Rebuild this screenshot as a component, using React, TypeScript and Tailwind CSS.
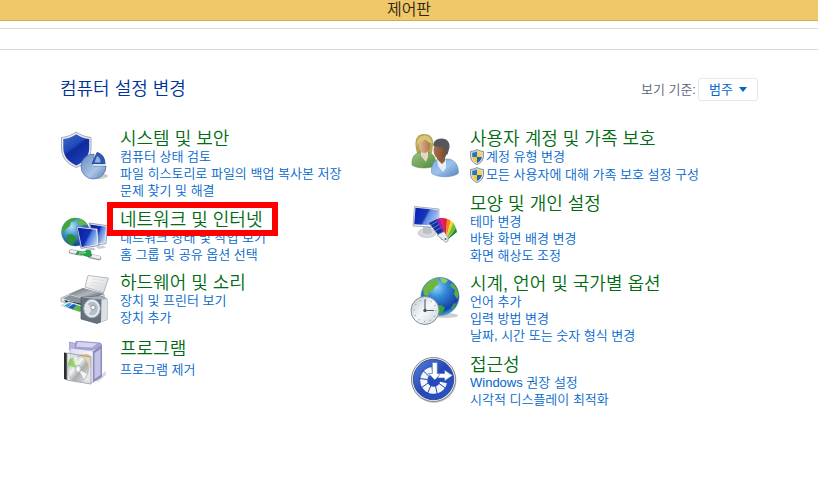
import type { ReactNode } from "react";

type Category = {
  title: string;
  icon: ReactNode;
  links: string[];
  shield?: boolean;
  highlighted?: boolean;
  className?: string;
  linksClassName?: string;
};

function SecurityIcon() {
  return (
    <svg viewBox="0 0 50 50" className="w-[50px] h-[50px]" aria-hidden="true">
      <defs>
        <linearGradient id="sec-a" x1="0" y1="0" x2=".6" y2="1">
          <stop offset="0" stopColor="#3d68cc" />
          <stop offset=".45" stopColor="#2349b8" />
          <stop offset=".55" stopColor="#0f2a9c" />
          <stop offset="1" stopColor="#1b3fb6" />
        </linearGradient>
        <linearGradient id="sec-b" x1="0" y1="0" x2="1" y2="1">
          <stop offset="0" stopColor="#6388c0" />
          <stop offset=".6" stopColor="#a9c5e6" />
          <stop offset="1" stopColor="#5c7fb6" />
        </linearGradient>
      </defs>
      <ellipse cx="38" cy="45" rx="10" ry="3" fill="#000" opacity=".2" />
      <path d="M16.300 1C12 4 7 6 1.500 6.500V17c0 9 5.500 16 14.800 19.500C25.500 33 31 26 31 17V6.500C25.500 6 20.500 4 16.300 1z" fill="#e9ecf0" stroke="#8e969f" strokeWidth=".8" />
      <path d="M16.300 3.200C12.500 5.700 8 7.700 3.300 8.100V17c0 8 4.900 14 13 17.400C24.400 31 29.200 25 29.200 17V8.100C24.500 7.700 20.100 5.700 16.300 3.200z" fill="url(#sec-a)" />
      <path d="M34 23v12h12A12.500 12.500 0 1 1 34 23z" fill="url(#sec-b)" stroke="#5673a5" strokeWidth=".8" />
      <path d="M37 21.500c5 1 8 5.500 8 11.500H32z" fill="#2f58ae" stroke="#1c3f8e" strokeWidth=".8" />
      <path d="M37 25c2.500 1 3.500 3.500 3.500 6.500H34.500z" fill="#8fb0e0" />
      <path d="M32 33h13v2H34z" fill="#d3e1f3" />
    </svg>
  );
}

function NetworkIcon() {
  return (
    <svg viewBox="0 0 50 50" className="w-[50px] h-[50px]" aria-hidden="true">
      <defs>
        <radialGradient id="net-a" cx=".35" cy=".3" r=".75">
          <stop offset="0" stopColor="#b5e4f8" />
          <stop offset=".45" stopColor="#3c96cf" />
          <stop offset="1" stopColor="#0d3d88" />
        </radialGradient>
        <linearGradient id="net-b" x1="0" y1=".2" x2="1" y2=".7">
          <stop offset="0" stopColor="#0a1f9e" />
          <stop offset=".5" stopColor="#1130b8" />
          <stop offset=".6" stopColor="#4b78dc" />
          <stop offset="1" stopColor="#c3d7f8" />
        </linearGradient>
      </defs>
      <circle cx="15.500" cy="20" r="14" fill="url(#net-a)" stroke="#3b7c9e" strokeWidth=".5" />
      <path d="M5 11c3-4 8-5.500 12-5l-2 3-4 1-1 4-4 3-3 4c-2-3 0-7 2-10z" fill="#45a53b" />
      <path d="M19 6.500c4 1 7 4 8.500 7l-4-1-3 1-3-3z" fill="#63b944" />
      <path d="M7 23l5-1 4 3-1 4-3 4.500C8 32 6 28 7 23z" fill="#2f9033" />
      <path d="M29 11l17 2.500c1 0 1.200.5 1.200 1.200L46 31.500 37 33z" fill="#eef1f6" stroke="#71798c" strokeWidth=".7" />
      <path d="M30 12.600l15.800 2.200L45 30.300 37 31.300z" fill="url(#net-b)" />
      <path d="M36 35l7-1.500 3 2-7 1.500z" fill="#c8ced7" />
      <path d="M16.500 14.500L36 16.500c1 0 1.500.5 1.600 1.500L39 33.500l-18 2.800z" fill="#f3f5f9" stroke="#626b82" strokeWidth=".7" />
      <path d="M17.700 15.700l18.500 2 1.300 14.800L21.700 35z" fill="url(#net-b)" />
      <path d="M25 37l8-1.500 3 2-8 1.500z" fill="#bcc4cf" />
      <path d="M11 39.500l10 2M30 44l9 2" fill="none" stroke="#8e969e" strokeWidth="4.500" strokeLinecap="round" />
      <path d="M11 39.200l10 2M30 43.500l9 2" fill="none" stroke="#edf0f3" strokeWidth="3" strokeLinecap="round" />
      <path d="M16 42.500c3-1.500 5 0 7 .500s5 2.500 8.500 1l-1-5c-3-1-5 0-6 .500-2 1-5 0-7 0z" fill="#22a84c" stroke="#157a35" strokeWidth=".7" />
      <path d="M19 41c2-.5 4 .5 7-.5" fill="none" stroke="#a5efb2" />
    </svg>
  );
}

function HardwareIcon() {
  return (
    <svg viewBox="0 0 50 50" className="w-[50px] h-[50px]" aria-hidden="true">
      <defs>
        <linearGradient id="hw-a" x1="0" y1="0" x2="1" y2="1">
          <stop offset="0" stopColor="#fff" />
          <stop offset="1" stopColor="#cfd3d8" />
        </linearGradient>
        <linearGradient id="hw-b" x1="0" y1="0" x2="1" y2="1">
          <stop offset="0" stopColor="#596069" />
          <stop offset=".5" stopColor="#b1b8c0" />
          <stop offset="1" stopColor="#333940" />
        </linearGradient>
      </defs>
      <path d="M28 .5L48.500 3l-5 15L25 12z" fill="url(#hw-a)" stroke="#8c9298" strokeWidth=".6" />
      <path d="M32 4l12 1.500M31 7l12 2M30 10l11 2" stroke="#d4d7db" strokeWidth=".6" />
      <path d="M1 23l22-9.500 21 5.500v6l-20 8L1 26.500z" fill="#e6e9ec" stroke="#777e86" strokeWidth=".6" />
      <path d="M9 19l14-6 21 6-17 6z" fill="url(#hw-b)" />
      <path d="M3 23.500l7-3.500 15 4.500-2 5z" fill="#8a929b" />
      <path d="M4 25l19 4v4.500L7 28.500z" fill="#20262d" />
      <path d="M1.500 30.500l7-4 14 4v7z" fill="#fff" stroke="#9299a1" strokeWidth=".5" />
      <path d="M4 30.800l5-3 3 1-4 3.500z" fill="#31a4dc" />
      <path d="M8 32.500l5-3.500 4 1-4 4.500z" fill="#2459b8" />
      <path d="M13 34.500l4-4.500 5 1.500v4.500l-3 .5z" fill="#58b947" />
      <path d="M21 22.500L41 21l6 3v20.500l-10 4L21 44z" fill="#64717f" stroke="#3d4955" strokeWidth=".6" />
      <path d="M41.500 22l5.500 2v20.500l-6 3z" fill="#dbe0e5" />
      <path d="M21 22.500L41 21l5.500 3-4 .8z" fill="#a6b0ba" />
      <ellipse cx="32" cy="33.500" rx="8.200" ry="9.200" fill="#eceff2" stroke="#a7afb8" />
      <ellipse cx="32" cy="33.500" rx="6" ry="7" fill="#b7bec7" />
      <path d="M32 33.500l-5-5a8 8 0 0 0 1 12z" fill="#e2e5e9" />
      <circle cx="33" cy="32.500" r="2.300" fill="#f8f9fa" stroke="#7c858f" strokeWidth=".8" />
    </svg>
  );
}

function ProgramsIcon() {
  return (
    <svg viewBox="0 0 50 50" className="w-[50px] h-[50px]" aria-hidden="true">
      <defs>
        <linearGradient id="prg-a" x1="0" y1="0" x2="1" y2="0">
          <stop offset="0" stopColor="#dcdcf6" />
          <stop offset="1" stopColor="#f6f6ff" />
        </linearGradient>
        <linearGradient id="prg-b" x1="0" y1="0" x2="1" y2="1">
          <stop offset="0" stopColor="#8d9292" />
          <stop offset=".4" stopColor="#f3f4f4" />
          <stop offset=".6" stopColor="#a9adad" />
          <stop offset="1" stopColor="#e8eaea" />
        </linearGradient>
      </defs>
      <path d="M34 39l12-9v4l-8 7z" fill="#000" opacity=".15" />
      <path d="M9.500 1l6 1.500V10l-6-1z" fill="#b9b7df" stroke="#8583b0" strokeWidth=".6" />
      <path d="M16 0L40.500 2l1.500 3-10 4-17-1.500z" fill="#a7a5d8" stroke="#7d7bb0" strokeWidth=".6" />
      <path d="M18 1l19 1.500-5 4-16-1z" fill="#d6d5f1" />
      <path d="M10 7l23 3v31.500L10 39z" fill="url(#prg-a)" stroke="#a5a3ca" strokeWidth=".6" />
      <path d="M33 10l9-6v32l-9 5.500z" fill="#8d8bbc" />
      <path d="M34.500 12l6-4v26l-6 4z" fill="#c5c3e6" />
      <path d="M18 14l9-1 4 2v10l-4 4z" fill="#f0b86a" />
      <path d="M4 11.500l3 .5v27l-3-1z" fill="#2c2f31" />
      <path d="M7 12l24 4v27L7 39z" fill="#dde3e2" fillOpacity=".65" stroke="#8f9896" strokeWidth=".8" />
      <ellipse cx="18" cy="28" rx="10.500" ry="13" fill="url(#prg-b)" stroke="#9ea4a4" strokeWidth=".5" />
      <path d="M18 28L8 24c0-3 1-6 3-7z" fill="#82d34b" opacity=".8" />
      <path d="M18 28L13 16l4-1z" fill="#e7f3d2" />
      <path d="M18 28l9 5-3 5z" fill="#fff" opacity=".8" />
      <ellipse cx="18" cy="28" rx="3" ry="3.700" fill="#e3e7e7" stroke="#9ca3a3" strokeWidth=".7" />
      <circle cx="18" cy="28" r="1.200" fill="#fff" />
    </svg>
  );
}

function UsersIcon() {
  return (
    <svg viewBox="0 0 50 50" className="w-[50px] h-[50px]" aria-hidden="true">
      <defs>
        <linearGradient id="usr-a" x1="0" y1="0" x2="1" y2="1">
          <stop offset="0" stopColor="#9cc480" />
          <stop offset="1" stopColor="#4f8a3a" />
        </linearGradient>
        <linearGradient id="usr-b" x1="0" y1="0" x2="1" y2="1">
          <stop offset="0" stopColor="#7fabdc" />
          <stop offset=".5" stopColor="#9cc2ec" />
          <stop offset="1" stopColor="#5583bc" />
        </linearGradient>
        <linearGradient id="usr-c" x1="0" y1="0" x2="1" y2="0">
          <stop offset="0" stopColor="#e2bb93" />
          <stop offset="1" stopColor="#a9754f" />
        </linearGradient>
        <linearGradient id="usr-d" x1="0" y1="0" x2="1" y2="0">
          <stop offset="0" stopColor="#a8714b" />
          <stop offset="1" stopColor="#70452a" />
        </linearGradient>
      </defs>
      <path d="M7 22C4 12 5 3 14 3c7 0 9.500 4 9 11l-1 8z" fill="#b7a456" />
      <path d="M2 34c-.5-7 2-12 9-13h6c6 1 9 5 9 13-5 4-19 4-24 0z" fill="url(#usr-a)" stroke="#55853f" strokeWidth=".5" />
      <path d="M11 19h7v7l-2 5-5-6z" fill="#e6d6c6" />
      <ellipse cx="14.500" cy="14" rx="5.500" ry="8" fill="url(#usr-c)" />
      <path d="M7 15c-1-7 3-10.500 7-10.500s7.500 2 8 8c-3-1-5-2-7-4-2 2-5 2-8 6.500z" fill="#d5c678" />
      <path d="M21.500 42c-.5-8 2-13 8-14h9c7 1 10 7 10 14-5 5-22 5-27 0z" fill="url(#usr-b)" stroke="#5580b4" strokeWidth=".5" />
      <path d="M27 28l4-2 5 3 0 8-3 4-5-6z" fill="#e6eff8" />
      <path d="M27 24h8v6l-3 3-5-5z" fill="#8c5a38" />
      <ellipse cx="30.500" cy="19" rx="7" ry="9.500" fill="url(#usr-d)" />
      <path d="M23.500 15c-1-4 3-7.500 8-7.500 6 0 8.500 4 8 9l-2 7-2-1v-5c-3-2-7-1.500-12-2.500z" fill="#53585c" />
    </svg>
  );
}

function AppearanceIcon() {
  return (
    <svg viewBox="0 0 50 50" className="w-[50px] h-[50px]" aria-hidden="true">
      <defs>
        <linearGradient id="app-a" x1="0" y1=".3" x2="1" y2=".7">
          <stop offset="0" stopColor="#0c24b4" />
          <stop offset=".45" stopColor="#1733ba" />
          <stop offset=".55" stopColor="#5f8be2" />
          <stop offset="1" stopColor="#b4cdf6" />
        </linearGradient>
      </defs>
      <ellipse cx="17" cy="37" rx="9" ry="4.500" fill="#d5d8dc" stroke="#b1b5ba" strokeWidth=".6" />
      <path d="M13 31h8l1 6c-3 1.500-6 1.500-9 0z" fill="#bcc1c7" />
      <path d="M4.500 10.500L29 13l-.5 18.500L3 30z" fill="#f1f3f6" stroke="#858d99" strokeWidth=".7" />
      <path d="M5.500 11.700l22.500 2.300-.5 15.500L4.200 28.200z" fill="url(#app-a)" />
      <path d="M19 27l8-4 10 19-5 2z" fill="#14329f" />
      <path d="M26 23.500l4-1.500 7 21z" fill="#9c1fa6" />
      <path d="M29.500 22l4 0 3 21z" fill="#df1c88" />
      <path d="M33 22l4 .8-1 20z" fill="#dc2420" />
      <path d="M37 22.800l3.700 1.700-4.700 19z" fill="#ef8420" />
      <path d="M40.700 24.500l3 2.500-7.700 17z" fill="#ecd62a" />
      <path d="M43.500 27l2.500 5-10 12z" fill="#6fbd30" />
      <path d="M46 32l1 4-11 9z" fill="#278a32" />
      <path d="M21 29l6-3.500M23 32l6-3.500M25 35l6-3.500" stroke="#6390e0" strokeWidth=".8" />
      <path d="M27 39l7-3.500 4 5.500v4l-2 1.500z" fill="#e9ecef" stroke="#747b83" strokeWidth=".6" />
      <circle cx="35.500" cy="43" r="1" fill="#58606a" />
    </svg>
  );
}

function ClockIcon() {
  return (
    <svg viewBox="0 0 50 50" className="w-[50px] h-[50px]" aria-hidden="true">
      <defs>
        <radialGradient id="clk-a" cx=".4" cy=".25" r=".8">
          <stop offset="0" stopColor="#93d6f6" />
          <stop offset=".35" stopColor="#3388d6" />
          <stop offset=".8" stopColor="#163fa6" />
          <stop offset="1" stopColor="#4dc1ec" />
        </radialGradient>
        <linearGradient id="clk-b" x1="0" y1="0" x2="1" y2="1">
          <stop offset="0" stopColor="#b9c5ce" />
          <stop offset=".5" stopColor="#f6f9fb" />
          <stop offset="1" stopColor="#c5ced6" />
        </linearGradient>
      </defs>
      <ellipse cx="35" cy="39.500" rx="13" ry="2.500" fill="#000" opacity=".2" />
      <circle cx="30" cy="20.500" r="19" fill="url(#clk-a)" stroke="#3a6e9c" strokeWidth=".5" />
      <path d="M13 13c3-6 8-10 15-11l-1 3 2 3-4 3-3 4-3 1-1 4-4-1z" fill="#70b53e" />
      <path d="M30 2l5 .5 3 2-3 3-3-1z" fill="#94cd59" />
      <path d="M42 7c4 3 6.500 8 6.500 13l-1.500 3-3-5 1-4-3-2-2-3z" fill="#5aae3d" />
      <path d="M27 30l4-1 4 3-3 5-3 2.300-2-1z" fill="#38a33c" />
      <path d="M44 27l2 1-3 5-2-1z" fill="#3ba23c" />
      <circle cx="15" cy="34.500" r="14" fill="url(#clk-b)" stroke="#848f98" strokeWidth="1" />
      <circle cx="15" cy="34.500" r="11" fill="none" stroke="#7c8994" strokeWidth="1.200" strokeDasharray=".8 4.960" />
      <path d="M15 23.500V34.500H24" fill="none" stroke="#4d6170" strokeWidth="1.100" />
      <circle cx="15" cy="34.500" r="1.700" fill="#41586c" />
    </svg>
  );
}

function AccessIcon() {
  return (
    <svg viewBox="0 0 50 50" className="w-[50px] h-[50px]" aria-hidden="true">
      <defs>
        <linearGradient id="acc-a" x1="0" y1="0" x2="1" y2="1">
          <stop offset="0" stopColor="#5a83dc" />
          <stop offset=".5" stopColor="#2447b8" />
          <stop offset="1" stopColor="#2c57c9" />
        </linearGradient>
      </defs>
      <circle cx="24" cy="23.500" r="22.500" fill="#000" opacity=".2" />
      <circle cx="23.500" cy="22.500" r="22" fill="#edf0f3" stroke="#777d85" strokeWidth=".9" />
      <circle cx="23.500" cy="22.500" r="20.200" fill="url(#acc-a)" stroke="#2b3f82" strokeWidth=".8" />
      <path d="M33.500 25.500A10 10 0 1 1 22 13.500" fill="none" stroke="#f3f5f9" strokeWidth="7" />
      <path d="M17.500 22.500L9 21.500M18 26l-7 5M21 28.500l-4 9M25.500 29l2 9M29 26.500l7 5M19 19.500l-6-6" stroke="#2447ac" strokeWidth="1" />
      <path d="M22.300 5.500h5V16.500h4l-6.500 6.500-6.500-6.500h4z" fill="#fff" stroke="#4467b8" strokeWidth=".6" />
      <path d="M30 16.500h4.500v-3.500l8 5.500-8 5.500V21h-7z" fill="#fff" stroke="#4467b8" strokeWidth=".6" />
    </svg>
  );
}

function UacShield() {
  return (
    <svg viewBox="0 0 14 16" className="w-3.5 h-4 shrink-0" aria-hidden="true">
      <path d="M7 .5C5 1.700 3 2.300.6 2.500V7c0 4 2.400 7 6.400 8.500C11 14 13.400 11 13.400 7V2.500C11 2.300 9 1.700 7 .5z" fill="#dfe4ea" stroke="#737b86" strokeWidth=".9" />
      <path d="M7 2.200C5.500 3 4 3.500 2.200 3.700V8H7z" fill="#2474cf" />
      <path d="M7 2.200c1.500.8 3 1.300 4.800 1.500V8H7z" fill="#fbd43c" />
      <path d="M2.200 8H7v6C4.200 12.800 2.500 10.800 2.200 8z" fill="#fbc920" />
      <path d="M11.800 8H7v6c2.800-1.200 4.500-3.200 4.800-6z" fill="#1f62bf" />
    </svg>
  );
}

const leftCategories: Category[] = [
  {
    title: "시스템 및 보안",
    icon: <SecurityIcon />,
    links: ["컴퓨터 상태 검토", "파일 히스토리로 파일의 백업 복사본 저장", "문제 찾기 및 해결"],
  },
  {
    title: "네트워크 및 인터넷",
    icon: <NetworkIcon />,
    links: ["네트워크 상태 및 작업 보기", "홈 그룹 및 공유 옵션 선택"],
    highlighted: true,
    className: "mt-[10px]",
  },
  {
    title: "하드웨어 및 소리",
    icon: <HardwareIcon />,
    links: ["장치 및 프린터 보기", "장치 추가"],
    className: "mt-[9px]",
  },
  {
    title: "프로그램",
    icon: <ProgramsIcon />,
    links: ["프로그램 제거"],
    className: "mt-3",
    linksClassName: "mt-[3px]",
  },
];

const rightCategories: Category[] = [
  {
    title: "사용자 계정 및 가족 보호",
    icon: <UsersIcon />,
    links: ["계정 유형 변경", "모든 사용자에 대해 가족 보호 설정 구성"],
    shield: true,
  },
  {
    title: "모양 및 개인 설정",
    icon: <AppearanceIcon />,
    links: ["테마 변경", "바탕 화면 배경 변경", "화면 해상도 조정"],
    className: "mt-[9px]",
  },
  {
    title: "시계, 언어 및 국가별 옵션",
    icon: <ClockIcon />,
    links: ["언어 추가", "입력 방법 변경", "날짜, 시간 또는 숫자 형식 변경"],
    className: "mt-[9px]",
  },
  {
    title: "접근성",
    icon: <AccessIcon />,
    links: ["Windows 권장 설정", "시각적 디스플레이 최적화"],
    className: "mt-[10px]",
  },
];

function CategoryItem({ item }: { item: Category }) {
  return (
    <section className={`flex items-start ${item.className ?? ""}`}>
      <div className="w-[60px] h-[52px] pt-0.5 shrink-0">{item.icon}</div>
      <div className="min-w-0">
        <h2 className="text-[18px] leading-5 font-[350] text-[#006b12]">
          <a href="#" className="relative z-10 inline-block align-top hover:underline">
            {item.title}
            {item.highlighted && (
              <span className="absolute -top-2 -left-[13px] w-[171px] h-[34px] border-6 border-[#ff0000]" />
            )}
          </a>
        </h2>
        <ul className={item.linksClassName}>
          {item.links.map((link) => (
            <li key={link} className={item.shield ? "h-[18px]" : "h-[17px]"}>
              <a
                href="#"
                className="flex items-center gap-0.5 text-[13px] leading-4 text-[#0066cc] hover:underline"
              >
                {item.shield && <UacShield />}
                {link}
              </a>
            </li>
          ))}
        </ul>
      </div>
    </section>
  );
}

export default function App() {
  return (
    <div className="min-h-screen bg-white font-[350] font-['Liberation_Sans','Noto_Sans_CJK_KR',sans-serif]">
      <header className="h-[21px] bg-[#f0c869] border-b border-[#d3ab55] text-center text-base leading-5 text-[#2b2417]">
        제어판
      </header>
      <div className="mt-[7px] h-[22px] border-y border-[#d9d9d9]" />

      <main className="px-[60px] pt-7">
        <div className="flex items-start justify-between">
          <h1 className="text-[18px] leading-[22px] text-[#003399]">컴퓨터 설정 변경</h1>
          <div className="flex items-center gap-0.5 text-[13px]">
            <label htmlFor="view-by" className="text-[#5a6478]">
              보기 기준:
            </label>
            <div className="relative">
              <select
                id="view-by"
                className="block appearance-none w-[60px] h-[23px] pl-[10px] pr-5 border border-[#e3e8f0] rounded-[3px] bg-white font-normal text-[#0066cc] leading-5"
              >
                <option>범주</option>
                <option>큰 아이콘</option>
                <option>작은 아이콘</option>
              </select>
              <svg
                viewBox="0 0 8 5"
                className="absolute right-[11px] top-[9px] w-2 h-[5px] pointer-events-none"
                aria-hidden="true"
              >
                <path d="M0 0h8L4 5z" fill="#0066cc" />
              </svg>
            </div>
          </div>
        </div>

        <div className="mt-7 grid grid-cols-2 gap-x-0.5">
          <div>
            {leftCategories.map((item) => (
              <CategoryItem key={item.title} item={item} />
            ))}
          </div>
          <div>
            {rightCategories.map((item) => (
              <CategoryItem key={item.title} item={item} />
            ))}
          </div>
        </div>
      </main>
    </div>
  );
}
